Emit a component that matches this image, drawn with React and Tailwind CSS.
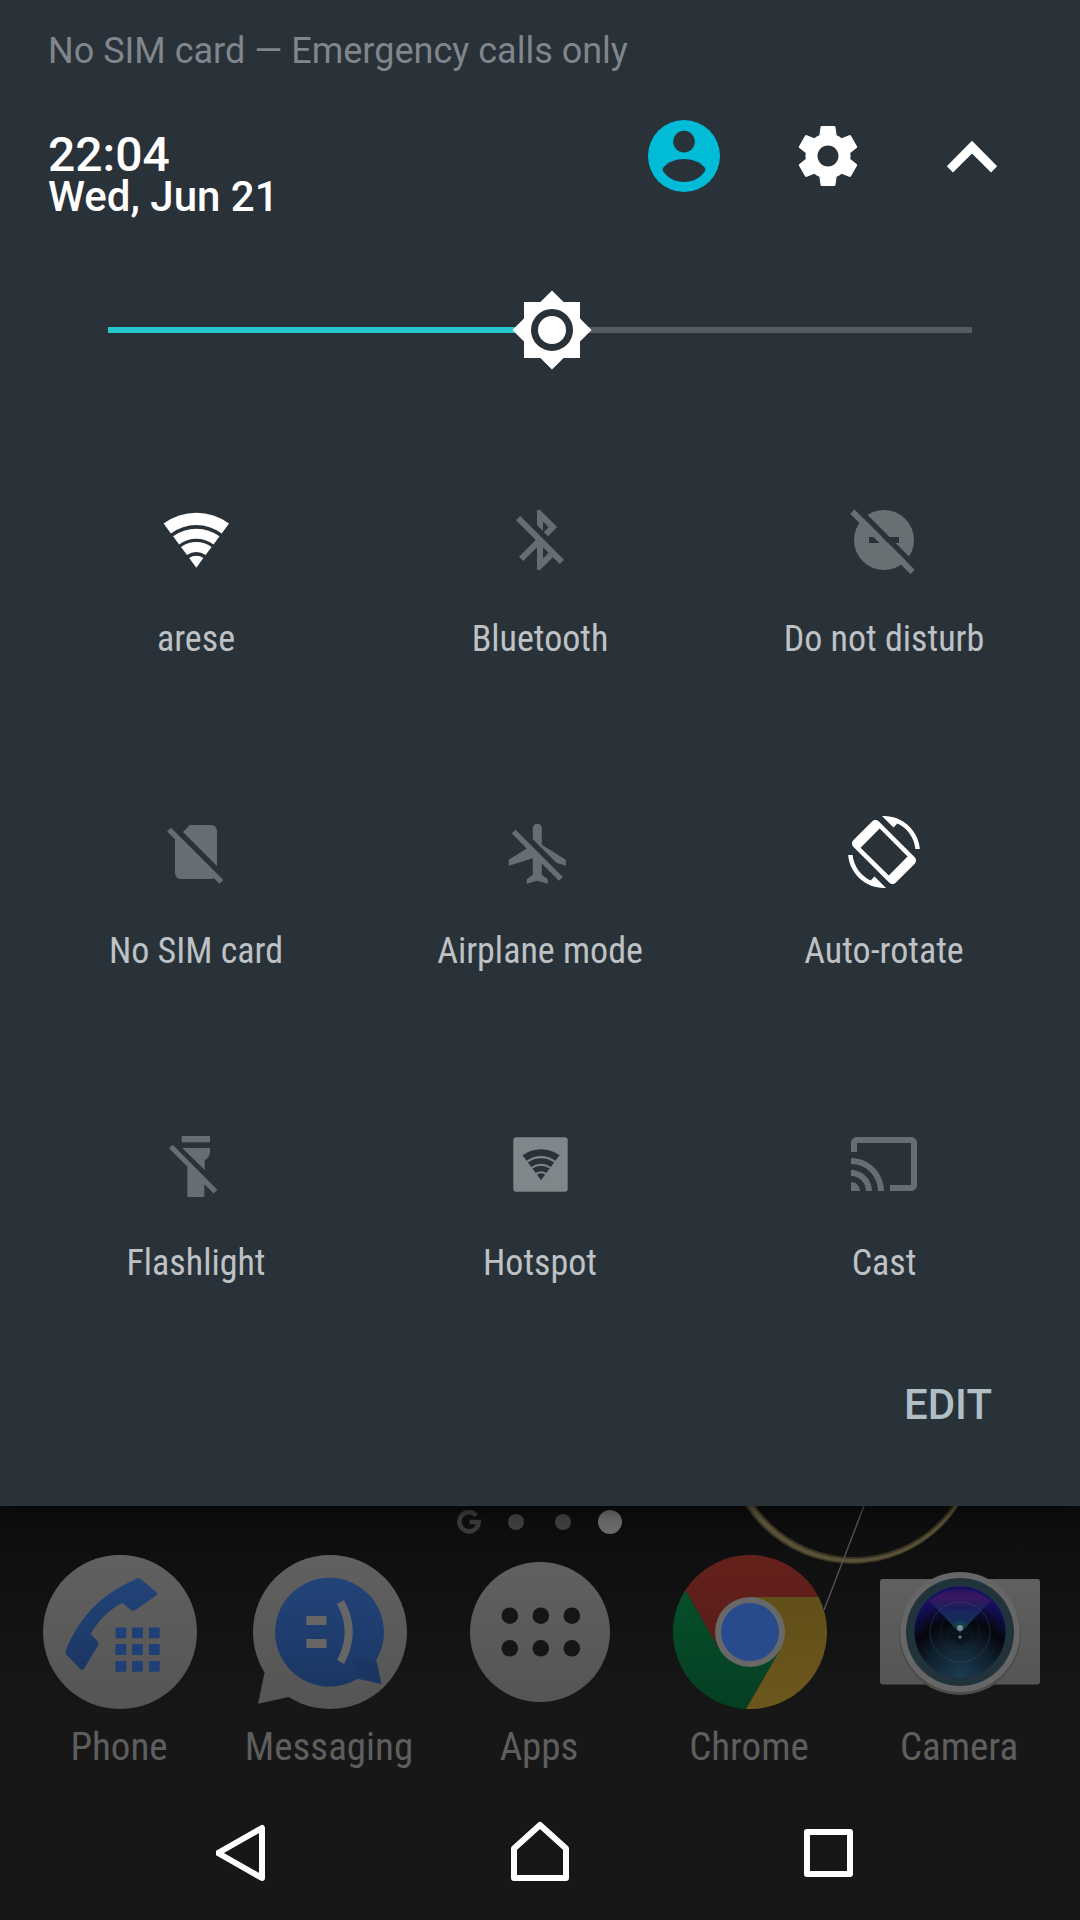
import { useState } from "react";

const WIFI_PATH =
  "M36.3 63.7L29.2 54.1A12 12 0 0 1 43.4 54.1ZM27 51.1L21 43A25.7 25.7 0 0 1 51.6 43L45.6 51.1A15.7 15.7 0 0 0 27 51.1ZM19.1 40.4L13.1 32.3A39 39 0 0 1 59.5 32.3L53.5 40.4A29 29 0 0 0 19.1 40.4ZM10.9 29.4L3.6 19.5A55 55 0 0 1 69 19.5L61.7 29.4A42.7 42.7 0 0 0 10.9 29.4Z";

function WifiIcon() {
  return (
    <svg viewBox="0 0 72 72" className="w-[72px] h-[72px] fill-white">
      <path d={WIFI_PATH} />
    </svg>
  );
}

function BluetoothOffIcon() {
  return (
    <svg viewBox="0 0 24 24" className="w-[72px] h-[72px] fill-[#676e73]">
      <path d="M13 5.83l1.88 1.88-1.6 1.6 1.41 1.41 3.02-3.02L12 2h-1v5.03l2 2v-3.2zM5.41 4L4 5.41 10.59 12 5 17.59 6.41 19 11 14.41V22h1l4.29-4.29 2.3 2.29L20 18.59 5.41 4zM13 18.17v-3.76l1.88 1.88L13 18.17z" />
    </svg>
  );
}

function DndOffIcon() {
  return (
    <svg viewBox="0 0 72 72" className="w-[72px] h-[72px]">
      <circle cx="36" cy="36" r="30" fill="#677073" />
      <rect x="21" y="33" width="30" height="6" fill="#293139" />
      <path d="M2 -2.8L74 69.2" stroke="#293139" strokeWidth="5.4" />
      <path d="M4.3 7.6L64.6 67.9" stroke="#677073" strokeWidth="6" />
    </svg>
  );
}

function NoSimIcon() {
  return (
    <svg viewBox="0 0 24 24" className="w-[72px] h-[72px] fill-[#676e73]">
      <path d="M18.99 5c0-1.1-.89-2-1.99-2h-7L7.66 5.34 19 16.68 18.99 5zM3.65 3.88L2.38 5.15 5 7.77V19c0 1.1.9 2 2 2h10.01c.35 0 .67-.1.96-.26l1.88 1.88 1.27-1.27L3.65 3.88z" />
    </svg>
  );
}

function AirplaneOffIcon() {
  return (
    <svg viewBox="0.4 -0.6 24 24" className="w-[72px] h-[72px] fill-[#676e73]">
      <path d="M13 9V3.5c0-.83-.67-1.5-1.5-1.5S10 2.67 10 3.5v3.68l7.83 7.83L21 16v-2l-8-5zM3 5.27l4.99 4.99L2 14v2l8-2.5V19l-2 1.5V22l3.5-1 3.5 1v-1.5L13 19v-3.73L18.73 21 20 19.73 4.27 4 3 5.27z" />
    </svg>
  );
}

function RotateIcon() {
  return (
    <svg viewBox="0 0 24 24" className="w-[72px] h-[72px] fill-white">
      <path d="M16.48 2.52c3.27 1.55 5.61 4.72 5.97 8.48h1.5C23.44 4.84 18.29 0 12 0l-.66.03 3.81 3.81 1.33-1.32z" />
      <path d="M7.52 21.48C4.25 19.94 1.91 16.76 1.55 13H.05C.56 19.16 5.71 24 12 24l.66-.03-3.81-3.81-1.33 1.32z" />
      <path
        fillRule="evenodd"
        d="M10.23 1.75c-.59-.59-1.54-.59-2.12 0L1.75 8.11c-.59.59-.59 1.54 0 2.12l12.02 12.02c.59.59 1.54.59 2.12 0l6.36-6.36c.59-.59.59-1.54 0-2.12L10.23 1.75zM10.55 4.2L4.2 10.55 13.6 19.85 19.85 13.5z"
      />
    </svg>
  );
}

function FlashlightOffIcon() {
  return (
    <svg viewBox="0 0 72 72" className="w-[72px] h-[72px] fill-[#676e73]">
      <path d="M21.7 8H50V14.3H21.7Z" />
      <path d="M22.3 20H50V23.5C50 28 47.5 31 44.7 32V42Z" />
      <path d="M12.7 16.7L57.3 61.8L53.7 65.4L44.3 56.3V69H27.3V38.7L9 20.3Z" />
    </svg>
  );
}

function HotspotIcon() {
  return (
    <svg viewBox="0 0 72 72" className="w-[72px] h-[72px]">
      <rect x="9.3" y="9.3" width="54.4" height="54.4" rx="3" fill="#80878a" />
      <path
        d={WIFI_PATH}
        fill="#293139"
        transform="translate(16.5 16.2) scale(.566)"
      />
    </svg>
  );
}

function CastIcon() {
  return (
    <svg viewBox="0 0 24 24" className="w-[72px] h-[72px] fill-[#676e73]">
      <path d="M21 3H3c-1.1 0-2 .9-2 2v3h2V5h18v14h-7v2h7c1.1 0 2-.9 2-2V5c0-1.1-.9-2-2-2zM1 18v3h3c0-1.66-1.34-3-3-3zm0-4v2c2.76 0 5 2.24 5 5h2c0-3.87-3.13-7-7-7zm0-4v2c4.97 0 9 4.03 9 9h2c0-6.08-4.93-11-11-11z" />
    </svg>
  );
}

const tiles = [
  { label: "arese", icon: WifiIcon },
  { label: "Bluetooth", icon: BluetoothOffIcon },
  { label: "Do not disturb", icon: DndOffIcon },
  { label: "No SIM card", icon: NoSimIcon },
  { label: "Airplane mode", icon: AirplaneOffIcon },
  { label: "Auto-rotate", icon: RotateIcon },
  { label: "Flashlight", icon: FlashlightOffIcon },
  { label: "Hotspot", icon: HotspotIcon },
  { label: "Cast", icon: CastIcon },
];

function BrightnessSlider() {
  const [value, setValue] = useState(131);
  const percent = (value / 255) * 100;

  return (
    <div className="relative h-24 mt-[54px] mx-[108px] flex items-center">
      <div className="w-full h-[6px] bg-[#565c64]">
        <div
          className="h-full bg-[#24c8cd]"
          style={{ width: `${percent}%` }}
        />
      </div>

      <svg
        viewBox="0 0 24 24"
        className="absolute w-[84px] h-[84px] -translate-x-1/2"
        style={{ left: `${percent}%` }}
      >
        <path
          fill="#fff"
          d="M20 8.69V4h-4.69L12 .69 8.69 4H4v4.69L.69 12 4 15.31V20h4.69L12 23.31 15.31 20H20v-4.69L23.31 12z"
        />
        <circle cx="12" cy="12" r="5" fill="#fff" stroke="#293139" strokeWidth="2" />
      </svg>

      <input
        type="range"
        min="0"
        max="255"
        value={value}
        onChange={(e) => setValue(Number(e.target.value))}
        aria-label="Brightness"
        className="absolute inset-0 w-full h-full opacity-0 cursor-pointer"
      />
    </div>
  );
}

function QuickSettings() {
  return (
    <section className="relative bg-[#293139] pt-[29px] shadow-[0_4px_16px_rgba(0,0,0,0.5)]">
      <p className="px-12 text-[36px] leading-[44px] text-[#80868b]">
        No SIM card — Emergency calls only
      </p>

      <header className="mt-[11px] pl-12 pr-9 flex justify-between">
        <div className="pt-[49px] font-medium text-white">
          <div className="text-[48px] leading-[44px]">22:04</div>
          <div className="text-[42px] leading-[40px]">Wed, Jun 21</div>
        </div>

        <div className="flex">
          <button
            aria-label="User"
            className="w-36 h-36 flex items-center justify-center"
          >
            <svg viewBox="0 0 72 72" className="w-[72px] h-[72px]">
              <circle cx="36" cy="36" r="36" fill="#00bcd7" />
              <circle cx="36" cy="21.6" r="10.8" fill="#293139" />
              <path
                fill="#293139"
                d="M15.2 51.3Q14 49.5 15.2 47.7C20 41.8 28 39 36 39S52 41.8 56.8 47.7Q58 49.5 56.8 51.3C52 58.3 44.5 62 36 62S20 58.3 15.2 51.3Z"
              />
            </svg>
          </button>

          <button
            aria-label="Settings"
            className="w-36 h-36 flex items-center justify-center"
          >
            <svg viewBox="0 0 24 24" className="w-[72px] h-[72px] fill-white">
              <path d="M19.43 12.98c.04-.32.07-.64.07-.98s-.03-.66-.07-.98l2.11-1.65c.19-.15.24-.42.12-.64l-2-3.46c-.12-.22-.39-.3-.61-.22l-2.49 1c-.52-.4-1.08-.73-1.69-.98l-.38-2.65C14.46 2.18 14.25 2 14 2h-4c-.25 0-.46.18-.49.42l-.38 2.65c-.61.25-1.17.59-1.69.98l-2.49-1c-.23-.09-.49 0-.61.22l-2 3.46c-.13.22-.07.49.12.64l2.11 1.65c-.04.32-.07.65-.07.98s.03.66.07.98l-2.11 1.65c-.19.15-.24.42-.12.64l2 3.46c.12.22.39.3.61.22l2.49-1c.52.4 1.08.73 1.69.98l.38 2.65c.03.24.24.42.49.42h4c.25 0 .46-.18.49-.42l.38-2.65c.61-.25 1.17-.59 1.69-.98l2.49 1c.23.09.49 0 .61-.22l2-3.46c.12-.22.07-.49-.12-.64l-2.11-1.65zM12 15.5c-1.93 0-3.5-1.57-3.5-3.5s1.57-3.5 3.5-3.5 3.5 1.57 3.5 3.5-1.57 3.5-3.5 3.5z" />
            </svg>
          </button>

          <button
            aria-label="Collapse"
            className="w-36 h-36 flex items-center justify-center"
          >
            <svg viewBox="0 0 72 72" className="w-[72px] h-[72px] fill-white">
              <path d="M36 20.7L10.8 46.2L17 52.5L36 33.6L55 52.5L61.2 46.2Z" />
            </svg>
          </button>
        </div>
      </header>

      <BrightnessSlider />

      <div className="mt-12 px-6 grid grid-cols-3">
        {tiles.map(({ label, icon: Icon }) => (
          <button
            key={label}
            className="h-[312px] pt-[78px] flex flex-col items-center gap-[41px] text-[36px] leading-[44px] text-[#bec2c5] font-['Roboto_Condensed',Roboto,sans-serif]"
          >
            <Icon />
            {label}
          </button>
        ))}
      </div>

      <div className="h-36 pt-[19px] pr-[72px] flex justify-end items-start">
        <button className="px-4 text-[42px] leading-[48px] font-medium text-[#b0bec5]">
          EDIT
        </button>
      </div>
    </section>
  );
}

function PhoneIcon() {
  return (
    <svg viewBox="-1 -1 156 156" className="w-[156px] h-[156px]">
      <circle cx="77" cy="77" r="77" fill="url(#disc)" />
      <path
        fill="url(#blue)"
        d="M92.5 24.2Q95.4 22 98.3 24.6L113.4 37.2Q115.4 39 113 40.8L91.6 55.4Q89.4 57 87.6 55L79.6 47.7C66 54.5 55 66 47.6 79L54.8 86.6Q56.2 88.2 55 90.6L41.2 113.6Q39 116.4 36.8 113.6L23.4 99.4Q21.8 97.6 22.8 95.4C25.4 89 28 83.4 31 78.3C44 54.6 64 36.5 92.5 24.2Z"
      />
      {[72.5, 89.1, 105.9].map((y) =>
        [72.5, 89.1, 105.9].map((x) => (
          <rect
            key={`${x}-${y}`}
            x={x}
            y={y}
            width="10.8"
            height="10.8"
            rx="1"
            fill="#1e3f78"
          />
        ))
      )}
    </svg>
  );
}

function MessagingIcon() {
  return (
    <svg viewBox="-1 -1 156 156" className="w-[156px] h-[156px]">
      <circle cx="77" cy="77" r="77" fill="url(#disc)" />
      <path d="M11.5 117.7L5 148.7L36 142L60 120Z" fill="#565656" />
      <circle cx="76.5" cy="77.2" r="54.4" fill="url(#blue)" />
      <path d="M123.8 107L128.6 129.3L104.9 123.7L100 105Z" fill="#1b3663" />
      <path d="M53.3 61H73.5V70H53.3ZM53.3 84H73.5V93H53.3Z" fill="#666666" />
      <path
        d="M87.5 47Q104 77 87.5 107"
        fill="none"
        stroke="#666666"
        strokeWidth="8"
      />
    </svg>
  );
}

function AppsIcon() {
  return (
    <svg viewBox="-1 -1 156 156" className="w-[156px] h-[156px]">
      <circle cx="77" cy="77" r="70" fill="url(#disc)" />
      {[60.7, 93.3].map((y) =>
        [46.8, 77.8, 108.8].map((x) => (
          <circle key={`${x}-${y}`} cx={x} cy={y} r="8.3" fill="#151515" />
        ))
      )}
    </svg>
  );
}

function ChromeIcon() {
  return (
    <svg viewBox="-1 -1 156 156" className="w-[156px] h-[156px]">
      <path d="M73 153.9A77 77 0 0 1 12.4 35.1L46.7 94.5H107.3Z" fill="url(#green)" />
      <path d="M145.6 42A77 77 0 0 1 73 153.9L107.3 94.5L77 42Z" fill="url(#yellow)" />
      <path d="M12.4 35.1A77 77 0 0 1 145.6 42H77L46.7 94.5Z" fill="url(#red)" />
      <circle cx="77" cy="77" r="35" fill="#686868" />
      <circle cx="77" cy="77" r="29" fill="#284b8e" />
    </svg>
  );
}

function CameraIcon() {
  return (
    <svg viewBox="-2 -1 164 156" className="w-[164px] h-[156px]">
      <rect x="0" y="24" width="160" height="105.5" rx="3" fill="url(#disc)" />
      <circle cx="80" cy="79" r="61" fill="#4c4c4c" />
      <circle cx="80" cy="77" r="60" fill="#666666" />
      <circle cx="80" cy="77" r="54" fill="#22323c" />
      <circle cx="80" cy="77" r="45.5" fill="url(#lens)" />
      <path d="M80 78L49 46A45.5 45.5 0 0 1 111 46Z" fill="url(#flare)" />
      <g fill="none" stroke="#3a5566" strokeOpacity=".4">
        <circle cx="80" cy="77" r="30" />
        <circle cx="80" cy="77" r="20" strokeOpacity=".2" />
      </g>
      <circle cx="80" cy="78" r="11" fill="#08131a" fillOpacity=".8" />
      <path d="M80 78L72 70A11 11 0 0 1 88 70Z" fill="#0e4450" />
      <circle cx="80" cy="73" r="3" fill="#7d8a8c" />
      <circle cx="80" cy="82" r="1.5" fill="#7d8a8c" />
    </svg>
  );
}

const dock = [
  { label: "Phone", icon: PhoneIcon },
  { label: "Messaging", icon: MessagingIcon },
  { label: "Apps", icon: AppsIcon },
  { label: "Chrome", icon: ChromeIcon },
  { label: "Camera", icon: CameraIcon },
];

// gradients shared by the dimmed launcher icons
function Gradients() {
  return (
    <svg className="absolute w-0 h-0" aria-hidden="true">
      <defs>
        <linearGradient id="disc" x1="0" y1="0" x2="0" y2="1">
          <stop offset="0" stopColor="#606060" />
          <stop offset="1" stopColor="#555555" />
        </linearGradient>
        <linearGradient id="blue" x1="0" y1="0" x2="0" y2="1">
          <stop offset="0" stopColor="#234479" />
          <stop offset="1" stopColor="#1a3663" />
        </linearGradient>
        <linearGradient id="red" x1="0" y1="0" x2="0" y2="1">
          <stop offset="0" stopColor="#64211c" />
          <stop offset="1" stopColor="#5a1c18" />
        </linearGradient>
        <linearGradient id="green" x1="0" y1="0" x2="0" y2="1">
          <stop offset="0" stopColor="#064f2a" />
          <stop offset="1" stopColor="#053f22" />
        </linearGradient>
        <linearGradient id="yellow" x1="0" y1="0" x2="0" y2="1">
          <stop offset="0" stopColor="#614e18" />
          <stop offset="1" stopColor="#6c581e" />
        </linearGradient>
        <radialGradient id="lens" cx=".5" cy="1" r=".9">
          <stop offset="0" stopColor="#1b3d52" />
          <stop offset=".45" stopColor="#0e1e2b" />
          <stop offset=".68" stopColor="#05070c" />
          <stop offset="1" stopColor="#140f66" />
        </radialGradient>
        <linearGradient id="flare" x1="0" y1="0" x2="0" y2="1">
          <stop offset="0" stopColor="#25125c" />
          <stop offset=".2" stopColor="#3a1763" />
          <stop offset=".45" stopColor="#1b1f5c" />
          <stop offset="1" stopColor="#0e3f55" />
        </linearGradient>
      </defs>
    </svg>
  );
}

function Wallpaper() {
  return (
    <svg
      viewBox="0 0 360 120"
      className="absolute top-0 left-2/3 w-1/3"
      aria-hidden="true"
    >
      <path
        fillRule="evenodd"
        fill="#3a3422"
        d="M5 -69a127 127 0 1 0 254 0a127 127 0 1 0 -254 0ZM14 -69a120 120 0 1 0 240 0a120 120 0 1 0 -240 0Z"
      />
      <path
        fillRule="evenodd"
        fill="#5a5238"
        d="M7 -69a125.5 125.5 0 1 0 251 0a125.5 125.5 0 1 0 -251 0ZM12 -69a122 122 0 1 0 244 0a122 122 0 1 0 -244 0Z"
      />
      <path d="M144 0L104 104" stroke="#525250" strokeWidth="1.4" />
    </svg>
  );
}

function HomeScreen() {
  return (
    <main className="relative flex-1 flex flex-col bg-linear-to-b from-[#0d0d0d] to-[#171717] to-50%">
      <Gradients />
      <Wallpaper />

      <div className="relative h-8 pr-0.5 flex justify-center items-center" aria-hidden="true">
        <div className="w-[47px] flex justify-center">
          <svg viewBox="0 0 24 24" className="w-6 h-6">
            <path
              d="M19.2 5.4A9.6 9.6 0 1 0 21.6 12H12.5"
              fill="none"
              stroke="#3a3a3a"
              strokeWidth="4.6"
            />
          </svg>
        </div>
        <div className="w-[47px] flex justify-center">
          <div className="w-4 h-4 rounded-full bg-[#3f3f3f]" />
        </div>
        <div className="w-[47px] flex justify-center">
          <div className="w-4 h-4 rounded-full bg-[#3f3f3f]" />
        </div>
        <div className="w-[47px] flex justify-center">
          <div className="w-6 h-6 rounded-full bg-[#6a6a6a]" />
        </div>
      </div>

      <div className="relative pt-4 px-[15px] grid grid-cols-5">
        {dock.map(({ label, icon: Icon }) => (
          <button
            key={label}
            className="flex flex-col items-center gap-4 text-[39px] leading-[42px] text-[#5e5e5e] font-['Roboto_Condensed',Roboto,sans-serif]"
          >
            <Icon />
            <span className="pr-0.5">{label}</span>
          </button>
        ))}
      </div>

      <nav className="relative mt-auto h-[132px] flex justify-center">
        <button aria-label="Back" className="w-72 flex items-center justify-center">
          <svg viewBox="0 0 72 72" className="w-[72px] h-[72px]">
            <path
              d="M2 35L46 10V60Z"
              fill="none"
              stroke="#fff"
              strokeWidth="6"
              strokeLinejoin="round"
            />
          </svg>
        </button>
        <button aria-label="Home" className="w-72 flex items-center justify-center">
          <svg viewBox="0 0 72 72" className="w-[72px] h-[72px]">
            <path
              d="M10 30.5L36 7L62 30.5V60H10Z"
              fill="none"
              stroke="#fff"
              strokeWidth="6"
              strokeLinejoin="round"
            />
          </svg>
        </button>
        <button aria-label="Recent apps" className="w-72 flex items-center justify-center">
          <svg viewBox="0 0 72 72" className="w-[72px] h-[72px]">
            <rect
              x="15"
              y="14"
              width="43"
              height="42"
              fill="none"
              stroke="#fff"
              strokeWidth="6"
              strokeLinejoin="round"
            />
          </svg>
        </button>
      </nav>
    </main>
  );
}

function App() {
  return (
    <div className="min-h-screen flex flex-col bg-[#171717] font-[Roboto,sans-serif]">
      <div className="relative z-10">
        <QuickSettings />
      </div>
      <HomeScreen />
    </div>
  );
}

export default App;
